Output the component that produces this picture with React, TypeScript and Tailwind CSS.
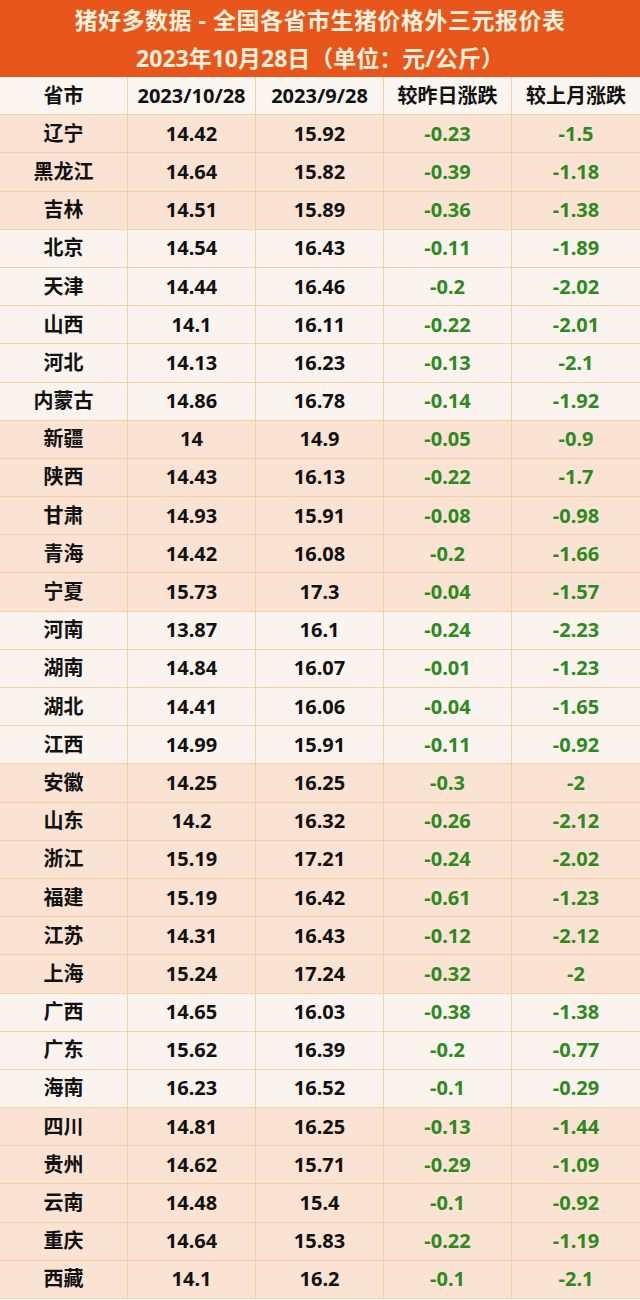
const rows: [string, string, string, string, string, boolean][] = [
  ["辽宁", "14.42", "15.92", "-0.23", "-1.5", true],
  ["黑龙江", "14.64", "15.82", "-0.39", "-1.18", true],
  ["吉林", "14.51", "15.89", "-0.36", "-1.38", true],
  ["北京", "14.54", "16.43", "-0.11", "-1.89", false],
  ["天津", "14.44", "16.46", "-0.2", "-2.02", false],
  ["山西", "14.1", "16.11", "-0.22", "-2.01", false],
  ["河北", "14.13", "16.23", "-0.13", "-2.1", false],
  ["内蒙古", "14.86", "16.78", "-0.14", "-1.92", false],
  ["新疆", "14", "14.9", "-0.05", "-0.9", true],
  ["陕西", "14.43", "16.13", "-0.22", "-1.7", true],
  ["甘肃", "14.93", "15.91", "-0.08", "-0.98", true],
  ["青海", "14.42", "16.08", "-0.2", "-1.66", true],
  ["宁夏", "15.73", "17.3", "-0.04", "-1.57", true],
  ["河南", "13.87", "16.1", "-0.24", "-2.23", false],
  ["湖南", "14.84", "16.07", "-0.01", "-1.23", false],
  ["湖北", "14.41", "16.06", "-0.04", "-1.65", false],
  ["江西", "14.99", "15.91", "-0.11", "-0.92", false],
  ["安徽", "14.25", "16.25", "-0.3", "-2", true],
  ["山东", "14.2", "16.32", "-0.26", "-2.12", true],
  ["浙江", "15.19", "17.21", "-0.24", "-2.02", true],
  ["福建", "15.19", "16.42", "-0.61", "-1.23", true],
  ["江苏", "14.31", "16.43", "-0.12", "-2.12", true],
  ["上海", "15.24", "17.24", "-0.32", "-2", true],
  ["广西", "14.65", "16.03", "-0.38", "-1.38", false],
  ["广东", "15.62", "16.39", "-0.2", "-0.77", false],
  ["海南", "16.23", "16.52", "-0.1", "-0.29", false],
  ["四川", "14.81", "16.25", "-0.13", "-1.44", true],
  ["贵州", "14.62", "15.71", "-0.29", "-1.09", true],
  ["云南", "14.48", "15.4", "-0.1", "-0.92", true],
  ["重庆", "14.64", "15.83", "-0.22", "-1.19", true],
  ["西藏", "14.1", "16.2", "-0.1", "-2.1", true],
];

const headers = ["省市", "2023/10/28", "2023/9/28", "较昨日涨跌", "较上月涨跌"];

export default function App() {
  return (
    <div
      className="w-[640px] bg-[#fbf4ee] font-bold"
      style={{ fontFamily: '"Noto Sans", "Noto Sans CJK SC", sans-serif' }}
    >
      {/* 标题 */}
      <div className="h-[77px] bg-[#e8561b] flex flex-col items-center justify-center text-[#fdf0dc] text-[23px] leading-[38px]">
        <div className="tracking-[0.5px]">猪好多数据 - 全国各省市生猪价格外三元报价表</div>
        <div>2023年10月28日（单位：元/公斤）</div>
      </div>

      {/* 表头 */}
      <div className="grid grid-cols-5 h-[38.2px] bg-[#fcf6f0] border-b border-[#f3d3a4] text-[20px] text-[#111]">
        {headers.map((h, i) => (
          <div
            key={h}
            className={`flex items-center justify-center ${i < 4 ? "border-r border-[#f3d3a4]" : ""}`}
          >
            {h}
          </div>
        ))}
      </div>

      {/* 数据行 */}
      {rows.map(([name, a, b, c, d, peach]) => (
        <div
          key={name}
          className={`grid grid-cols-5 h-[38.2px] border-b border-[#f3d3a4] text-[20px] ${
            peach ? "bg-[#fbe3d3]" : "bg-[#fbf4ee]"
          }`}
        >
          <div className="flex items-center justify-center border-r border-[#f3d3a4] text-[#111]">{name}</div>
          <div className="flex items-center justify-center border-r border-[#f3d3a4] text-[#111]">{a}</div>
          <div className="flex items-center justify-center border-r border-[#f3d3a4] text-[#111]">{b}</div>
          <div className="flex items-center justify-center border-r border-[#f3d3a4] text-[#2c8a1e]">{c}</div>
          <div className="flex items-center justify-center text-[#2c8a1e]">{d}</div>
        </div>
      ))}
    </div>
  );
}
